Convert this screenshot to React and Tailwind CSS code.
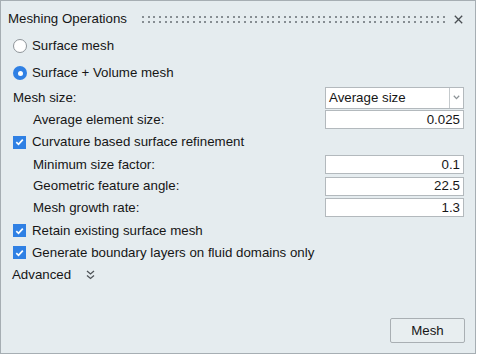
import React from "react";

const font = { fontFamily: '"Liberation Sans", Arial, sans-serif' };

const dotXs = Array.from({ length: 54 }, (_, i) => Math.round(i * 5.67));

function Radio({ checked }) {
  return checked ? (
    <span className="w-[14px] h-[14px] rounded-full bg-[#2f80e4] flex items-center justify-center shrink-0">
      <span className="w-[5px] h-[5px] rounded-full bg-white" />
    </span>
  ) : (
    <span className="w-[14px] h-[14px] rounded-full bg-white border border-[#8e9499] shrink-0" />
  );
}

function Check() {
  return (
    <span className="w-[13px] h-[13px] bg-[#2f80e4] flex items-center justify-center shrink-0">
      <svg width="9" height="8" viewBox="0 0 9 8">
        <path d="M1.3 4.2 L3.5 6.3 L7.8 1.6" fill="none" stroke="white" strokeWidth="1.7" />
      </svg>
    </span>
  );
}

function Input({ value }) {
  return (
    <div className="w-[139px] h-[19px] bg-white border border-[#b3b9bd] flex items-center justify-end pr-[3px]">
      {value}
    </div>
  );
}

function LabelRow({ h, label, value }) {
  return (
    <div className={`flex items-center justify-between pl-[32px] pr-[11px] ${h}`}>
      <span>{label}</span>
      <Input value={value} />
    </div>
  );
}

export default function App() {
  return (
    <div className="w-[477px] h-[355px] bg-white" style={font}>
      <div className="w-[476px] h-[354px] border border-[#a6aeb3] bg-[#e5ecef] flex flex-col text-[13.3px] text-[#161616]">
        <div className="h-[31px] pt-[5px] flex items-center pl-[7px] pr-[9px]">
          <span className="shrink-0">Meshing Operations</span>
          <svg className="ml-[15px] mr-[9px] shrink-0" width="303" height="7" viewBox="0 0 303 7">
            {dotXs.map((x) => (
              <g key={x}>
                <rect x={x} y="0" width="2" height="2" fill="#868d92" />
                <rect x={x} y="5" width="2" height="2" fill="#868d92" />
              </g>
            ))}
          </svg>
          <svg width="9" height="9" viewBox="0 0 9 9" className="shrink-0">
            <path d="M0.8 0.8 L8.2 8.2 M8.2 0.8 L0.8 8.2" stroke="#4a4f53" strokeWidth="1.3" />
          </svg>
        </div>
        <div className="h-[28px] flex items-center gap-[5px] pl-[12px]">
          <Radio />
          <span>Surface mesh</span>
        </div>
        <div className="h-[26px] flex items-center gap-[5px] pl-[12px]">
          <Radio checked />
          <span>Surface + Volume mesh</span>
        </div>
        <div className="h-[23px] flex items-center justify-between pl-[12px] pr-[11px]">
          <span>Mesh size:</span>
          <div className="w-[139px] h-[22px] bg-white border border-[#b3b9bd] flex items-stretch">
            <span className="flex-1 flex items-center pl-[3px]">Average size</span>
            <span className="w-[14px] border-l border-[#c5cacd] flex items-center justify-center">
              <svg width="7" height="5" viewBox="0 0 7 5">
                <path d="M0.8 0.8 L3.5 3.6 L6.2 0.8" fill="none" stroke="#8d9397" strokeWidth="1.3" />
              </svg>
            </span>
          </div>
        </div>
        <LabelRow h="h-[21px]" label="Average element size:" value="0.025" />
        <div className="h-[24px] flex items-center gap-[6px] pl-[12px]">
          <Check />
          <span>Curvature based surface refinement</span>
        </div>
        <LabelRow h="h-[21px]" label="Minimum size factor:" value="0.1" />
        <LabelRow h="h-[22px]" label="Geometric feature angle:" value="22.5" />
        <LabelRow h="h-[21px]" label="Mesh growth rate:" value="1.3" />
        <div className="h-[25px] flex items-center gap-[6px] pl-[12px]">
          <Check />
          <span>Retain existing surface mesh</span>
        </div>
        <div className="h-[19px] flex items-center gap-[6px] pl-[12px]">
          <Check />
          <span>Generate boundary layers on fluid domains only</span>
        </div>
        <div className="h-[26px] flex items-center pl-[11px]">
          <span>Advanced</span>
          <svg className="ml-[15px]" width="9" height="10" viewBox="0 0 9 10">
            <path d="M1 1 L4.5 4 L8 1 M1 5.5 L4.5 8.5 L8 5.5" fill="none" stroke="#4f5458" strokeWidth="1.3" />
          </svg>
        </div>
        <div className="mt-auto flex justify-end pr-[10px] pb-[10px]">
          <div className="w-[75px] h-[25px] border border-[#a9afb3] rounded-[2px] bg-[#e8eef0] flex items-center justify-center">
            Mesh
          </div>
        </div>
      </div>
    </div>
  );
}
